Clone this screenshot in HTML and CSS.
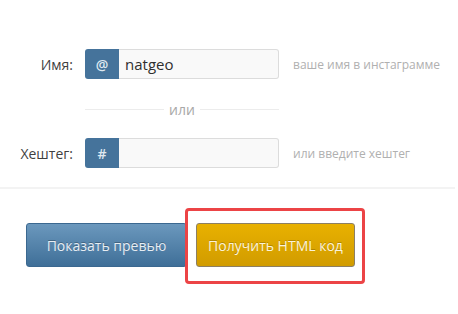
FILE: index.html
```html
<!DOCTYPE html>
<html lang="ru">
<head>
<meta charset="utf-8">
<title>Form</title>
<link rel="stylesheet" href="styles.css">
</head>
<body>
<div class="page">
  <form class="form">
    <div class="row">
      <label class="label">Имя:</label>
      <div class="group">
        <span class="addon">@</span>
        <input class="input" type="text" value="natgeo">
      </div>
      <span class="help">ваше имя в инстаграмме</span>
    </div>
    <div class="divider"><span class="line"></span><span class="or">или</span><span class="line"></span></div>
    <div class="row">
      <label class="label">Хештег:</label>
      <div class="group">
        <span class="addon">#</span>
        <input class="input" type="text" value="">
      </div>
      <span class="help">или введите хештег</span>
    </div>
    <div class="rule"></div>
    <div class="actions">
      <button type="button" class="btn btn-blue">Показать превью</button>
      <button type="button" class="btn btn-yellow">Получить HTML код</button>
      <span class="highlight"></span>
    </div>
  </form>
</div>
</body>
</html>
```
FILE: styles.css
```css
html, body {
  margin: 0;
  padding: 0;
  background: #fff;
}
body {
  font-family: "Open Sans", "DejaVu Sans", sans-serif;
  color: #444;
  width: 458px;
  height: 314px;
  overflow: hidden;
}
.page {
  padding-top: 49px;
}
.form {
  margin: 0;
}
.row {
  display: flex;
  align-items: center;
  height: 30px;
}
.label {
  width: 73px;
  text-align: right;
  font-size: 14px;
  color: #3f3f3f;
  margin-right: 12px;
}
.group {
  display: flex;
  width: 194px;
  height: 30px;
  box-sizing: border-box;
}
.addon {
  width: 34px;
  flex: none;
  background: #45739b;
  color: #dfe8f0;
  border-radius: 3px 0 0 3px;
  display: flex;
  align-items: center;
  justify-content: center;
  font-size: 14px;
  font-weight: 600;
}
.input {
  flex: 1;
  min-width: 0;
  box-sizing: border-box;
  height: 30px;
  margin: 0;
  border: 1px solid #dcdcdc;
  border-left: none;
  border-radius: 0 3px 3px 0;
  background: #f9f9f9;
  padding: 0 0 0 6px;
  font-family: "Open Sans", "DejaVu Sans", sans-serif;
  font-size: 15px;
  color: #2f2f2f;
  outline: none;
}
.help {
  margin-left: 14px;
  font-size: 12px;
  color: #b0b0b0;
}
.divider {
  display: flex;
  align-items: center;
  width: 194px;
  margin: 20px 0 18px 85px;
  height: 21px;
}
.line {
  flex: 1;
  height: 1px;
  background: #ececec;
}
.or {
  padding: 0 5px;
  font-size: 14px;
  color: #a8a8a8;
}
.rule {
  width: 455px;
  height: 2px;
  background: #f3f3f3;
  margin-top: 19px;
}
.actions {
  position: relative;
  display: flex;
  gap: 9px;
  padding: 34px 0 0 26px;
}
.btn {
  height: 44px;
  box-sizing: border-box;
  border-radius: 3px;
  font-family: "Open Sans", "DejaVu Sans", sans-serif;
  font-size: 14px;
  padding: 0;
  margin: 0;
  cursor: pointer;
}
.btn-blue {
  width: 161px;
  background: linear-gradient(#6b98bd, #3f6f98);
  border: 1px solid #3b6890;
  color: #e6edf3;
  text-shadow: 0 -1px 0 rgba(0,0,0,0.25);
}
.btn-yellow {
  width: 159px;
  background: linear-gradient(#e8b100, #d19c00);
  border: 1px solid #8c7f62;
  color: #fbf3da;
  text-shadow: 0 -1px 0 rgba(0,0,0,0.2);
}
.highlight {
  position: absolute;
  left: 185px;
  top: 19px;
  width: 180px;
  height: 76px;
  box-sizing: border-box;
  border: 3px solid #ec4446;
  border-radius: 4px;
}
```
